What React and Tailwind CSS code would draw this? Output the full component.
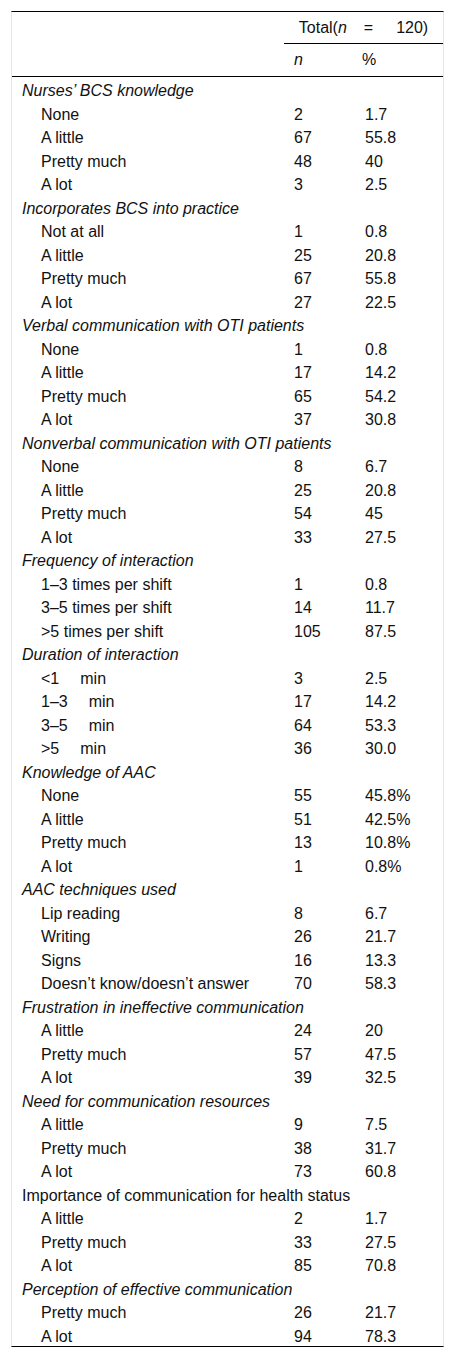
import React from 'react';

const groups = [
  {
    title: 'Nurses’ BCS knowledge',
    rows: [['None', '2', '1.7'], ['A little', '67', '55.8'], ['Pretty much', '48', '40'], ['A lot', '3', '2.5']],
  },
  {
    title: 'Incorporates BCS into practice',
    rows: [['Not at all', '1', '0.8'], ['A little', '25', '20.8'], ['Pretty much', '67', '55.8'], ['A lot', '27', '22.5']],
  },
  {
    title: 'Verbal communication with OTI patients',
    rows: [['None', '1', '0.8'], ['A little', '17', '14.2'], ['Pretty much', '65', '54.2'], ['A lot', '37', '30.8']],
  },
  {
    title: 'Nonverbal communication with OTI patients',
    rows: [['None', '8', '6.7'], ['A little', '25', '20.8'], ['Pretty much', '54', '45'], ['A lot', '33', '27.5']],
  },
  {
    title: 'Frequency of interaction',
    rows: [['1–3 times per shift', '1', '0.8'], ['3–5 times per shift', '14', '11.7'], ['>5 times per shift', '105', '87.5']],
  },
  {
    title: 'Duration of interaction',
    rows: [[['<1', 'min'], '3', '2.5'], [['1–3', 'min'], '17', '14.2'], [['3–5', 'min'], '64', '53.3'], [['>5', 'min'], '36', '30.0']],
  },
  {
    title: 'Knowledge of AAC',
    rows: [['None', '55', '45.8%'], ['A little', '51', '42.5%'], ['Pretty much', '13', '10.8%'], ['A lot', '1', '0.8%']],
  },
  {
    title: 'AAC techniques used',
    rows: [['Lip reading', '8', '6.7'], ['Writing', '26', '21.7'], ['Signs', '16', '13.3'], ['Doesn’t know/doesn’t answer', '70', '58.3']],
  },
  {
    title: 'Frustration in ineffective communication',
    rows: [['A little', '24', '20'], ['Pretty much', '57', '47.5'], ['A lot', '39', '32.5']],
  },
  {
    title: 'Need for communication resources',
    rows: [['A little', '9', '7.5'], ['Pretty much', '38', '31.7'], ['A lot', '73', '60.8']],
  },
  {
    title: 'Importance of communication for health status',
    plain: true,
    rows: [['A little', '2', '1.7'], ['Pretty much', '33', '27.5'], ['A lot', '85', '70.8']],
  },
  {
    title: 'Perception of effective communication',
    rows: [['Pretty much', '26', '21.7'], ['A lot', '94', '78.3']],
  },
];

const cell = 'h-[23.5px] pt-[4px] leading-[19.5px] whitespace-nowrap';

// duration rows carry a wide gap before the unit
const Label = ({ value }) => {
  if (Array.isArray(value)) {
    return (
      <>
        {value[0]}
        <span className="ml-[21px]">{value[1]}</span>
      </>
    );
  }
  return value;
};

export default function App() {
  return (
    <div className="bg-white pl-[11px] pt-[11px] pb-[12px] text-[16px] text-[#111]" style={{ fontFamily: '"Liberation Sans", Arial, sans-serif' }}>
      <div className="grid w-[433px] grid-cols-[272px_71px_1fr] border-x border-x-[#e6e6e6] border-t border-t-black border-b border-b-black">
        {/* header */}
        <div className="h-[32px]" />
        <div className="col-span-2 h-[32px] border-b border-b-black text-center leading-[31px]">
          Total(<i>n</i>
          <span className="ml-[17px]">=</span>
          <span className="ml-[23px]">120)</span>
        </div>
        <div className="col-span-3 grid grid-cols-[272px_71px_1fr] border-b border-b-black">
          <div className="h-[32px]" />
          <div className="h-[32px] pl-[10px] leading-[32px] italic">n</div>
          <div className="h-[32px] pl-[7px] leading-[32px]">%</div>
        </div>

        {/* body */}
        {groups.map((g) => (
          <React.Fragment key={g.title}>
            <div className={`col-span-3 pl-[10px] ${cell} ${g.plain ? '' : 'italic'}`}>{g.title}</div>
            {g.rows.map((r, i) => (
              <React.Fragment key={i}>
                <div className={`pl-[29px] ${cell}`}>
                  <Label value={r[0]} />
                </div>
                <div className={`pl-[10px] ${cell}`}>{r[1]}</div>
                <div className={`pl-[10px] ${cell}`}>{r[2]}</div>
              </React.Fragment>
            ))}
          </React.Fragment>
        ))}
      </div>
    </div>
  );
}
